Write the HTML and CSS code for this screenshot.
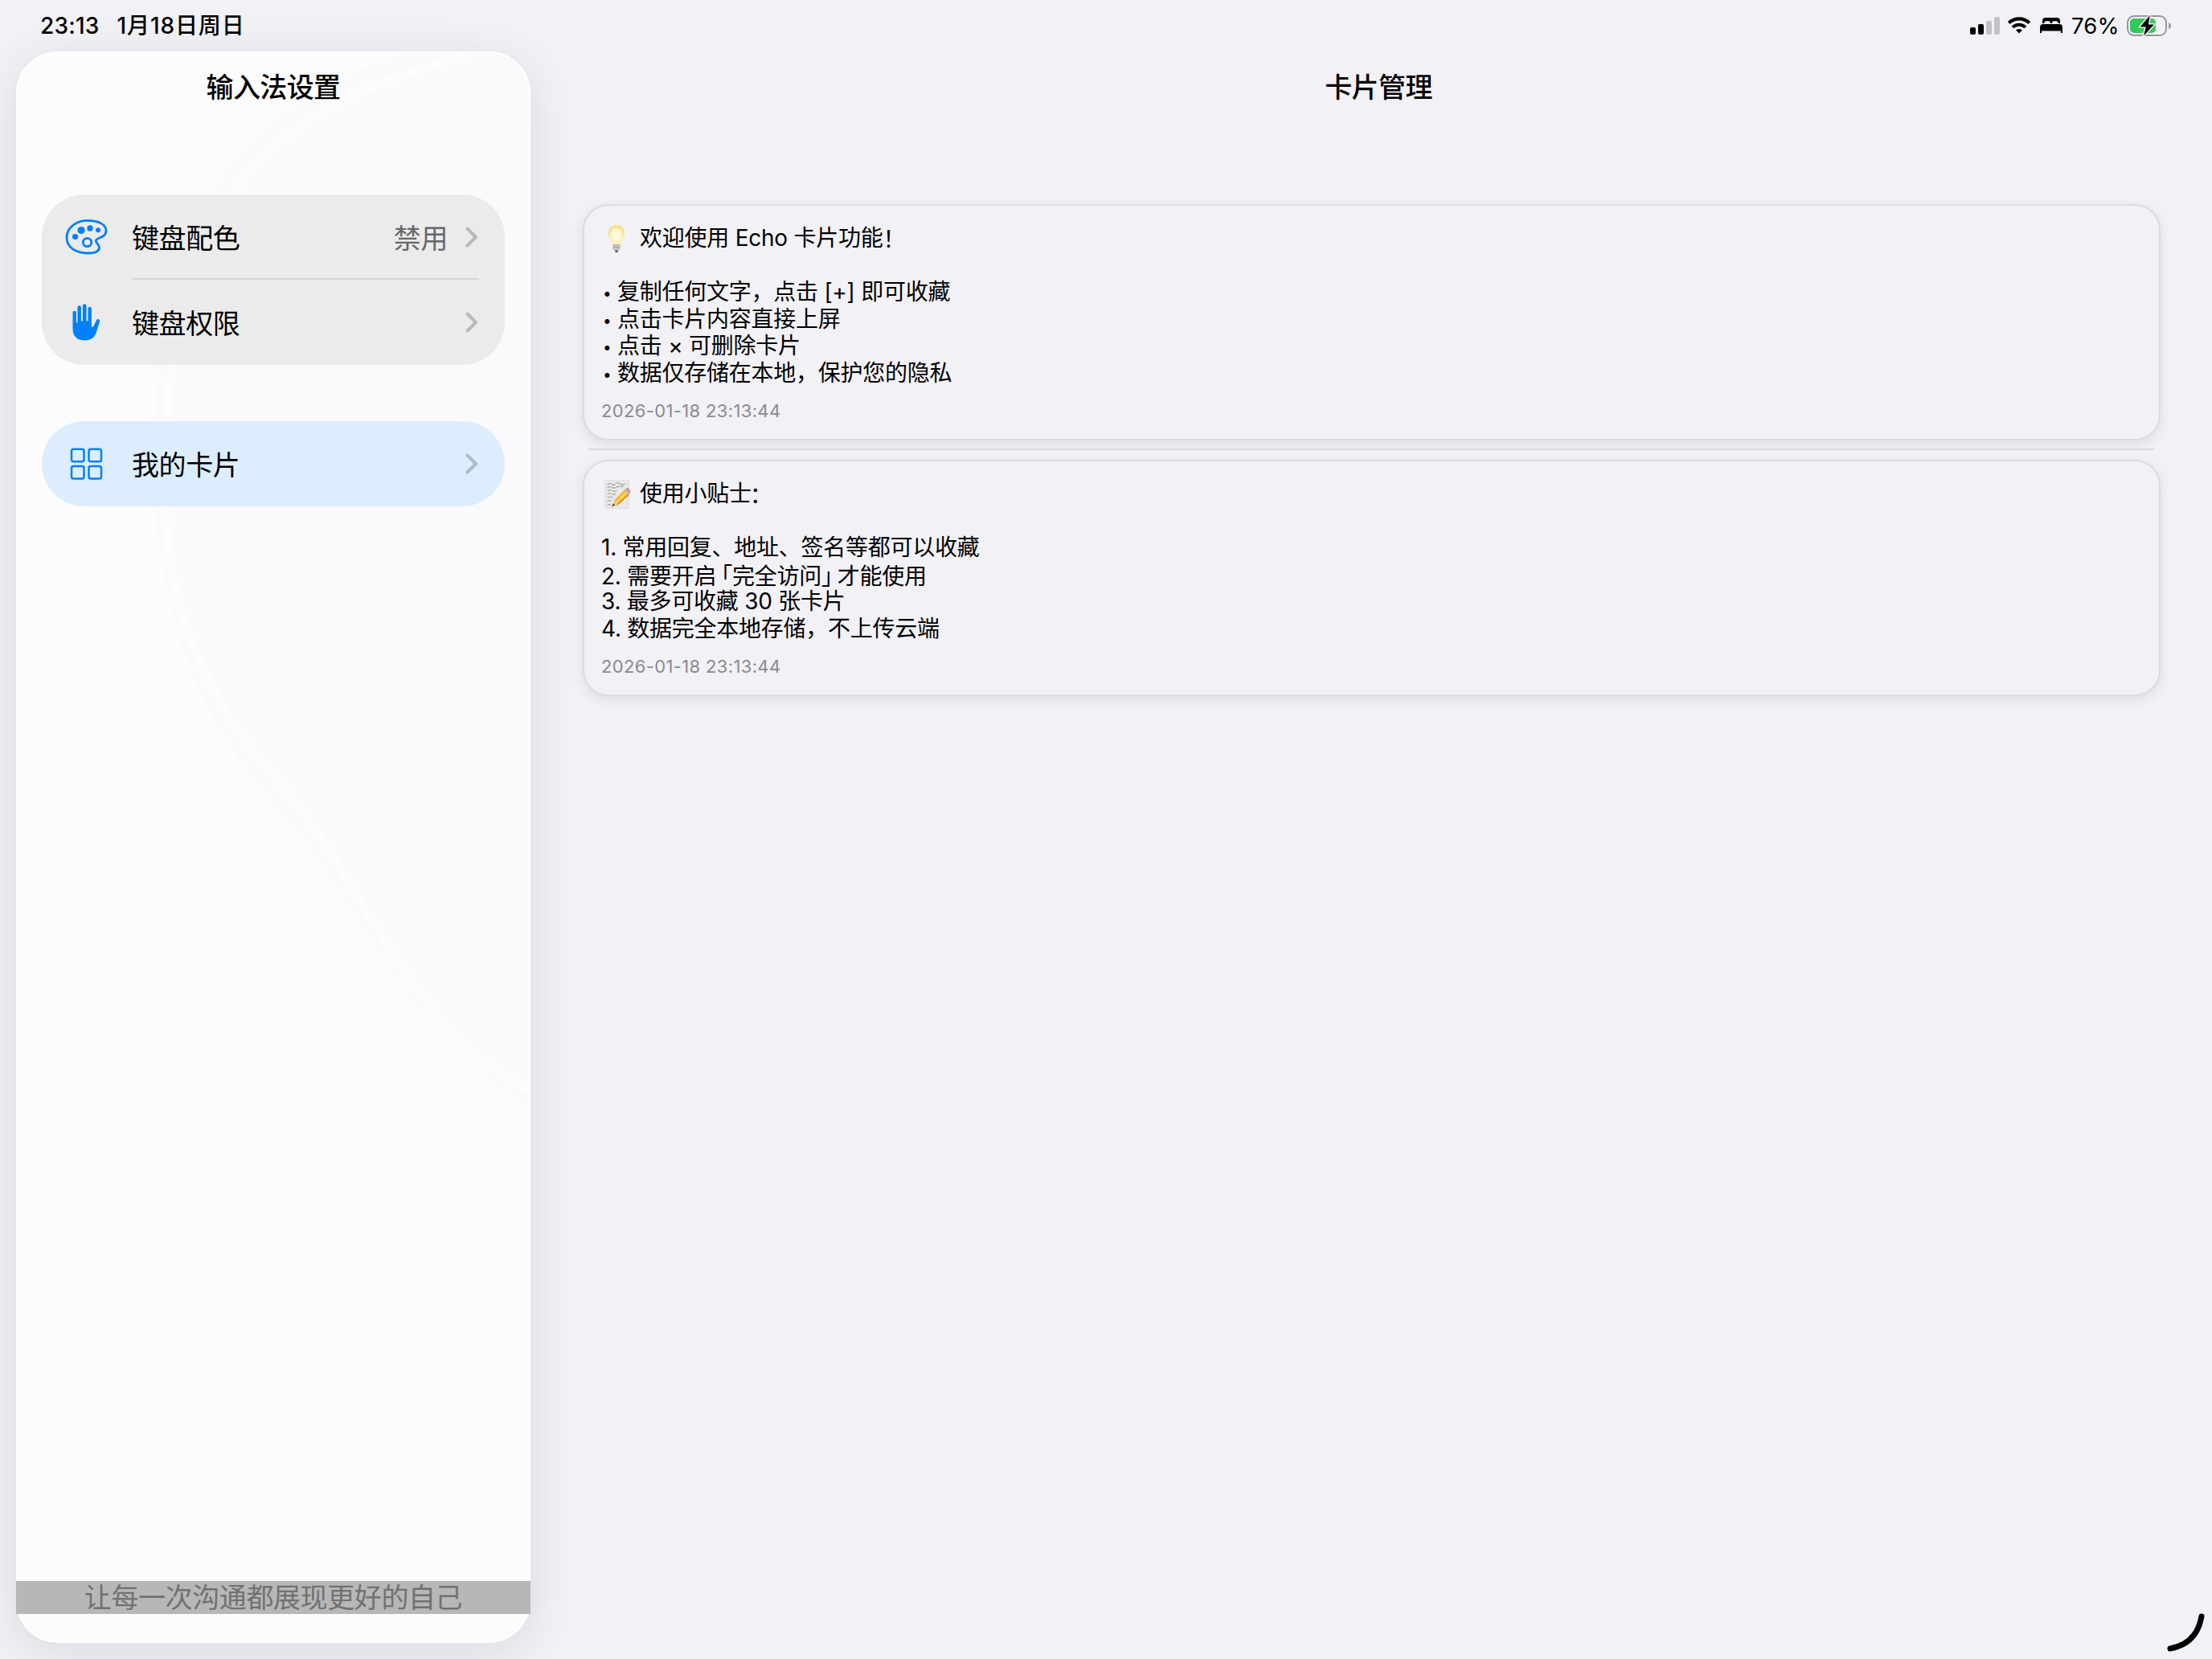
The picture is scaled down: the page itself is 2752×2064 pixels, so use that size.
FILE: index.html
```html
<!DOCTYPE html>
<html lang="zh-CN">
<head>
  <meta charset="UTF-8">
  <title>卡片管理</title>
  <link rel="stylesheet" href="styles.css">
</head>
<body>
  <header class="status-bar">
    <div class="status-left">
      <span class="time">23:13</span>
      <span class="date">1月18日周日</span>
    </div>
    <div class="status-right">
      <svg class="signal" width="38" height="23" viewBox="0 0 38 23">
        <rect x="0" y="13" width="7" height="9" rx="2"/>
        <rect x="10" y="9" width="7" height="13" rx="2"/>
        <rect x="20" y="5" width="7" height="17" rx="2" fill="#c1c1c6"/>
        <rect x="30" y="0" width="7" height="22" rx="2" fill="#c1c1c6"/>
      </svg>
      <svg class="wifi" width="30" height="22" viewBox="0 0 30 22">
        <path d="M2.200 7.600a18.500 18.500 0 0 1 25.600 0" fill="none" stroke="#000" stroke-width="4.200"/>
        <path d="M7 12.900a11.500 11.500 0 0 1 16 0" fill="none" stroke="#000" stroke-width="4"/>
        <path d="M15 20.600l-4-4a5.800 5.800 0 0 1 8 0z"/>
      </svg>
      <svg class="bed" width="28" height="20" viewBox="0 0 28 20">
        <path d="M3 7V4a4 4 0 0 1 4-4h14a4 4 0 0 1 4 4v3h-2.500a2.500 2.500 0 0 0-2.500-2.800h-3A1.800 1.800 0 0 0 15.200 6v1h-2.400V6A1.800 1.800 0 0 0 11 4.200H8A2.500 2.500 0 0 0 5.500 7z"/>
        <path d="M0 19v-7a4 4 0 0 1 4-4h20a4 4 0 0 1 4 4v7h-2v-2.500H2V19z"/>
      </svg>
      <span class="percent">76%</span>
      <svg class="battery" width="56" height="28" viewBox="0 0 56 28">
        <rect x="1" y="2" width="48" height="24" rx="8" fill="none" stroke="#98989c" stroke-width="2"/>
        <rect x="4" y="5" width="32" height="18" rx="5" fill="#34c759"/>
        <path d="M52 10q3 1 3 4t-3 4z" fill="#98989c"/>
        <path d="M28.800 1L16.500 15.500h7.300L21 26.500l13-14h-7.200z" fill="#000" stroke="#f2f1f6" stroke-width="3" stroke-linejoin="round" paint-order="stroke"/>
      </svg>
    </div>
  </header>

  <div class="layout">
    <aside class="sidebar">
      <!-- faint glass refraction behind the menu -->
      <svg class="glass" width="636" height="1400" viewBox="0 0 636 1400" fill="none">
        <path d="M636 0H480C300 60 195 170 175 400c-20 200 10 370 130 520 130 140 170 300 331 390z" fill="#fafafc"/>
        <path d="M560 4C330 60 215 170 190 400c-25 210 10 360 120 490 120 130 170 320 326 400" stroke="#fcfcfd" stroke-width="10"/>
      </svg>
      <h1 class="title">输入法设置</h1>
      <nav class="menu">
        <div class="group">
          <div class="row">
            <svg class="icon" width="52" height="44" viewBox="0 0 52 44" fill="none" stroke="#0080fb" stroke-width="2.800">
              <path d="M30 1.500C15 .5 1.500 9 1.500 22.500 1.500 35 13 42 28 42c9 0 14-2.500 14-7 0-4.500-5-5.500-4-9 1-3.500 12.500-3 12.500-12C50.500 6.500 41.500 2 30 1.500z"/>
              <circle cx="27" cy="28.500" r="5.200"/>
              <g fill="#0080fb" stroke="none">
                <circle cx="12" cy="21.500" r="3.600"/>
                <circle cx="19.500" cy="13.500" r="4.600"/>
                <circle cx="30.500" cy="11" r="3.700"/>
                <circle cx="40.500" cy="13.300" r="3"/>
              </g>
            </svg>
            <span class="label">键盘配色</span>
            <span class="value">禁用</span>
            <svg class="chevron" width="16" height="26" viewBox="0 0 16 26"><path d="M2.500 2.500L13 13 2.500 23.500"/></svg>
          </div>
          <div class="divider"></div>
          <div class="row">
            <svg class="icon" width="36" height="46" viewBox="0 0 36 46" fill="#0080fb">
              <path d="M1 31V11a2.200 2.200 0 0 1 4.400 0v12.500l1.600-.6V4.500a2.200 2.200 0 0 1 4.400 0v17l2-.3V2.600a2.300 2.300 0 0 1 4.600 0v18.600l2 .3V6a2.200 2.200 0 0 1 4.400 0v22.500l1.800.5 4.300-8.500c1.200-2.600 4.800-1.200 4.100 1.200L30.500 35C28.300 42 23.500 45.500 16 45.500 6.500 45.500 1 40.500 1 31z"/>
            </svg>
            <span class="label">键盘权限</span>
            <svg class="chevron" width="16" height="26" viewBox="0 0 16 26"><path d="M2.500 2.500L13 13 2.500 23.500"/></svg>
          </div>
        </div>
        <div class="group selected">
          <div class="row">
            <svg class="icon" width="40" height="40" viewBox="0 0 40 40" fill="none" stroke="#0080fb" stroke-width="2.500">
              <rect x="1.500" y="1.800" width="15.500" height="15.500" rx="2.500"/>
              <rect x="23" y="1.800" width="15.500" height="15.500" rx="2.500"/>
              <rect x="1.500" y="23" width="15.500" height="15.500" rx="2.500"/>
              <rect x="23" y="23" width="15.500" height="15.500" rx="2.500"/>
            </svg>
            <span class="label">我的卡片</span>
            <svg class="chevron blue" width="16" height="26" viewBox="0 0 16 26"><path d="M2.500 2.500L13 13 2.500 23.500"/></svg>
          </div>
        </div>
      </nav>
      <p class="slogan">让每一次沟通都展现更好的自己</p>
    </aside>

    <main class="content">
      <h1 class="title">卡片管理</h1>
      <section class="card">
        <p class="line first">
          <svg class="emoji" width="38" height="36" viewBox="0 0 38 36">
            <defs>
              <radialGradient id="bulb" cx=".5" cy=".55" r=".55">
                <stop offset="0" stop-color="#fffef5"/>
                <stop offset=".6" stop-color="#fff3c2"/>
                <stop offset="1" stop-color="#f7d878"/>
              </radialGradient>
            </defs>
            <path d="M19 1C13 1 9 5.500 9 11c0 6 4.500 8.500 5.500 14.500h9C24.500 19.500 29 17 29 11c0-5.500-4-10-10-10z" fill="url(#bulb)"/>
            <path d="M14.500 25.500h9v5L21 33h-4l-2.500-2.500z" fill="#a9a8a3"/>
            <path d="M14.500 28l9-1M14.800 31l8.400-1" stroke="#dddcd8" stroke-width="1"/>
            <path d="M17 33h4l-1 2h-2z" fill="#444"/>
          </svg>欢迎使用 Echo 卡片功能<span class="half">！</span>
        </p>
        <p class="line">&nbsp;</p>
        <p class="line"><span class="dot">•</span>复制任何文字，点击 [+] 即可收藏</p>
        <p class="line"><span class="dot">•</span>点击卡片内容直接上屏</p>
        <p class="line"><span class="dot">•</span>点击 × 可删除卡片</p>
        <p class="line"><span class="dot">•</span>数据仅存储在本地，保护您的隐私</p>
        <time class="stamp">2026-01-18 23:13:44</time>
      </section>
      <div class="separator"></div>
      <section class="card">
        <p class="line first">
          <svg class="emoji" width="38" height="36" viewBox="0 0 38 36">
            <rect x="5" y="0" width="29" height="35" fill="#e9e9e7" stroke="#d4d4d2" stroke-width=".8"/>
            <path d="M8 5.500q3-2 5 0t5-.5 6 0 6-.5M7.500 9.500q3-1.500 6 0t6-.5 8 0M8 13.500q3-1.500 6 0t6 0M7.500 17.500q3-1.500 6 0t5-.5M8 22q2-1.500 7 0M7.500 26.500q2-1.500 5 0M8 31q2-1 4 0" fill="none" stroke="#96969a" stroke-width="1.200" stroke-dasharray="5 .8"/>
            <path d="M13.500 33l3-8L29.500 12l5.500 5.500L21 30.500z" fill="#f4b92c"/>
            <path d="M18.500 28.500L32.300 14.800" stroke="#ffdc68" stroke-width="2"/>
            <path d="M19.600 31.500L34.500 18" stroke="#cc8414" stroke-width="1.200"/>
            <path d="M13.500 33l3-8 4.700 5.300z" fill="#e9c894"/>
            <path d="M13.500 33l1.300-3.500 2.200 2.300z" fill="#333"/>
            <path d="M28.500 13l2-2 5.500 5.500-2 2z" fill="#b4b9bd"/>
            <path d="M30.500 11q2-2 4.200.2t1.300 5.300z" fill="#ee8087"/>
          </svg>使用小贴士<span class="half colon">：</span>
        </p>
        <p class="line">&nbsp;</p>
        <p class="line">1. 常用回复、地址、签名等都可以收藏</p>
        <p class="line">2. 需要开启<span class="half open">「</span>完全访问<span class="half close">」</span>才能使用</p>
        <p class="line">3. 最多可收藏 30 张卡片</p>
        <p class="line">4. 数据完全本地存储，不上传云端</p>
        <time class="stamp">2026-01-18 23:13:44</time>
      </section>
      <svg class="corner" width="56" height="56" viewBox="0 0 56 56">
        <path d="M46 8Q40 42 7 48" fill="none" stroke="#000" stroke-width="7" stroke-linecap="round"/>
      </svg>
    </main>
  </div>
</body>
</html>
```

FILE: styles.css
```css
* {
  box-sizing: border-box;
}
body {
  margin: 0;
  height: 2064px;
  overflow: hidden;
  display: flex;
  flex-direction: column;
  background: #f2f1f6;
  color: #000;
  font-family: Inter, "Noto Sans CJK SC", sans-serif;
}
h1, p {
  margin: 0;
}
svg {
  display: block;
  flex: none;
}

/* status bar */
.status-bar {
  height: 64px;
  flex: none;
  display: flex;
  justify-content: space-between;
  padding: 0 50px 0 50px;
  font-size: 27.5px;
  line-height: 65px;
}
.status-left {
  display: flex;
  gap: 22px;
  font-weight: 500;
}
.time {
  font-size: 28px;
  letter-spacing: 0.2px;
}
.date {
  font-size: 28px;
  letter-spacing: 0.9px;
}
.status-right {
  display: flex;
  align-items: center;
}
.wifi {
  margin-left: 8px;
}
.bed {
  margin-left: 11px;
}
.percent {
  margin-left: 11px;
  width: 63px;
  letter-spacing: 0.2px;
}
.battery {
  margin-left: 6px;
}

.layout {
  flex: 1;
  display: flex;
}
.title {
  font-size: 34px;
  font-weight: 500;
  line-height: 48px;
  letter-spacing: -0.6px;
  text-align: center;
}

/* sidebar */
.sidebar {
  position: relative;
  width: 640px;
  height: 1980px;
  margin-left: 20px;
  display: flex;
  flex-direction: column;
  border: 2px solid #fff;
  border-radius: 52px;
  background: #fcfcfc;
  box-shadow: 0 12px 60px rgba(20, 20, 50, 0.1);
}
.glass {
  position: absolute;
  top: 0;
  left: 0;
  border-radius: 50px;
  z-index: 0;
}
.sidebar .title,
.menu,
.slogan {
  z-index: 1;
}
.sidebar .title {
  padding-top: 19px;
}
.menu {
  padding: 109px 30px 0;
  display: flex;
  flex-direction: column;
  gap: 70px;
}
.group {
  border-radius: 53px;
  background: #ebebec;
}
.group.selected {
  background: #dcedfd;
}
.row {
  height: 106px;
  display: flex;
  align-items: center;
  padding: 0 33px 0 0;
  font-size: 34px;
  letter-spacing: -0.4px;
}
.icon {
  width: 111px;
}
.label {
  flex: 1;
  margin: -2px 0 0 1px;
}
.value {
  color: #67676a;
  margin: -2px 22px 0 0;
}
.chevron {
  fill: none;
  stroke: #b9b9bb;
  stroke-width: 4;
  stroke-linecap: round;
  stroke-linejoin: round;
}
.chevron.blue {
  stroke: #aebbc8;
}
.divider {
  height: 2px;
  margin: -2px 32px 0 112px;
  background: #d5d5d7;
}
.slogan {
  margin: auto -2px 34px;
  height: 41px;
  line-height: 41px;
  text-align: center;
  font-size: 34px;
  letter-spacing: -0.4px;
  background: #b7b7b8;
  color: #717172;
}

/* cards */
.content {
  flex: 1;
  padding: 21px 64px 0 65px;
}
.content .title {
  margin: 0 -64px 121px -65px;
  padding-left: 18px;
}
.card {
  height: 294px;
  padding: 24px 21px;
  border: 2px solid #dcdbe0;
  border-radius: 32px;
  background: #f2f1f6;
  box-shadow: 0 4px 16px rgba(0, 0, 0, 0.09);
}
.line {
  font-size: 28px;
  line-height: 33.5px;
  height: 33.5px;
  letter-spacing: -0.25px;
  white-space: nowrap;
}
.first {
  display: flex;
  align-items: center;
}
.emoji {
  margin-right: 10px;
}
.dot {
  display: inline-block;
  width: 20px;
  padding-left: 2px;
  font-size: 19px;
  vertical-align: 1px;
  line-height: 20px;
}
.half {
  font-family: "Noto Sans CJK SC", sans-serif;
  font-feature-settings: "halt";
}
.colon {
  margin-left: -2px;
}
.open {
  margin-left: 6px;
}
.close {
  margin-right: 6px;
}
.stamp {
  display: block;
  margin-top: 16px;
  font-size: 22px;
  line-height: 28px;
  letter-spacing: 0.35px;
  color: #8a8a8e;
}
.separator {
  height: 2px;
  margin: 10px 8px 12px 7px;
  background: #d9d8dd;
}

/* stylus corner mark drawn over the page */
.corner {
  position: absolute;
  right: 3px;
  bottom: 5px;
}
```
